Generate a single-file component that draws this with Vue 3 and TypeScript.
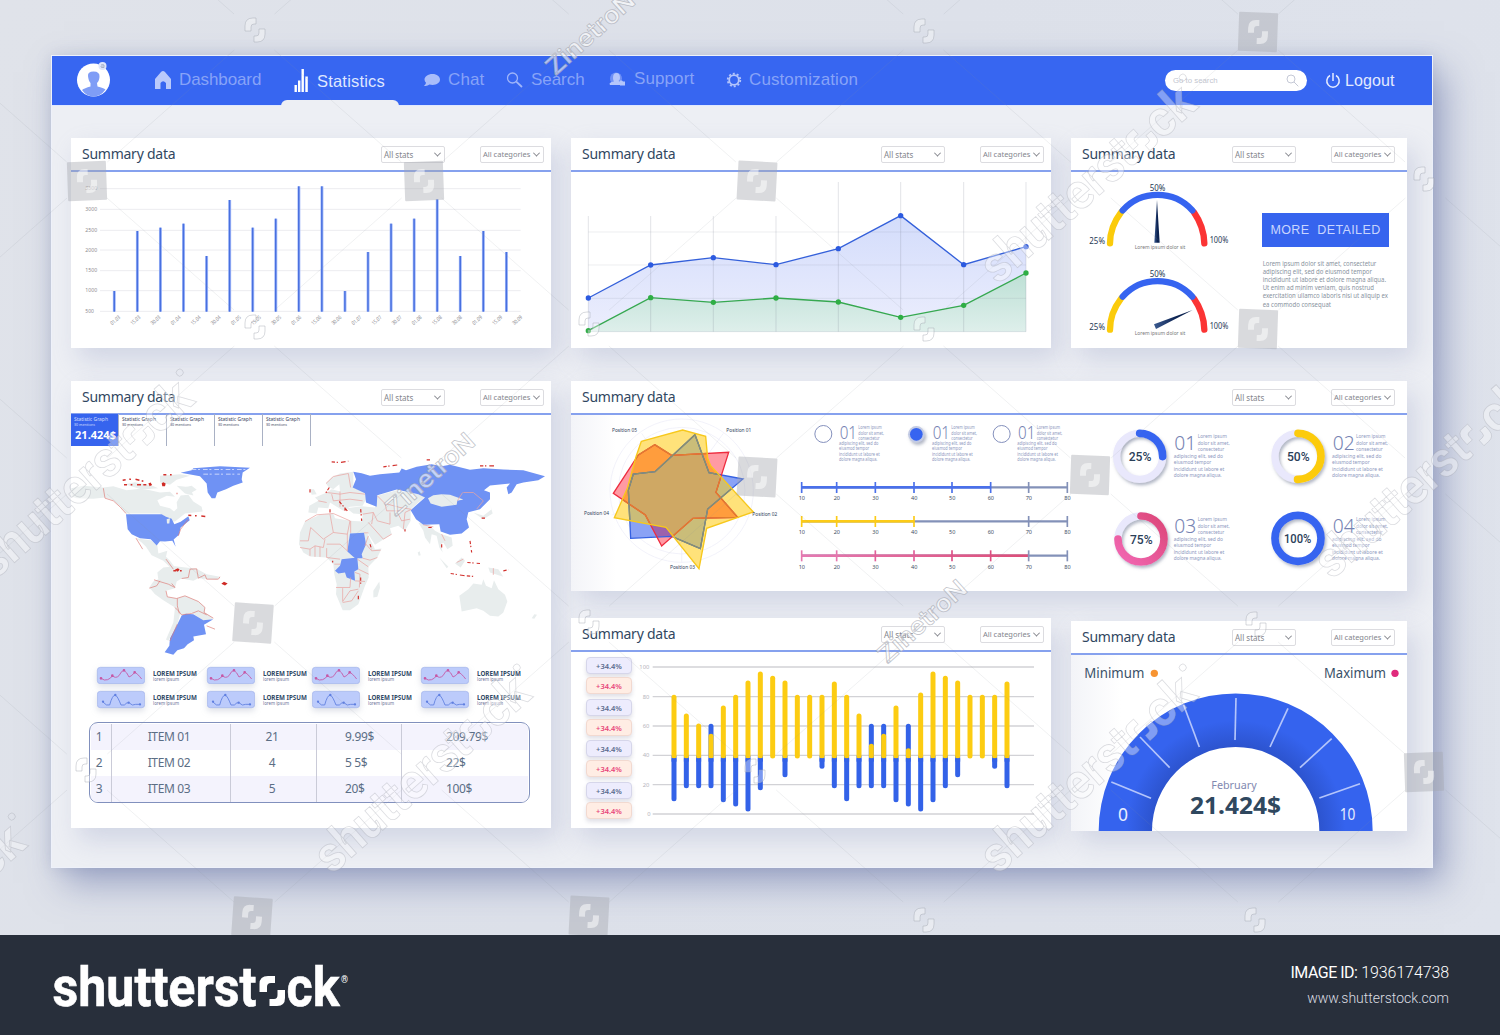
<script setup lang="ts">
import { h } from 'vue'

/* SVG text that is fitted to a given width through textLength */
const T = (p: Record<string, unknown>, { slots }: any) =>
  h('text', { lengthAdjust: 'spacingAndGlyphs', ...p }, slots.default?.())

const months = ['03', '04', '05', '06', '07', '08', '09']
const dates = months.flatMap((m) => ['01', '15', '30'].map((d) => `${d}.${m}`))
const barTops = [723, 543, 533, 521, 618, 450, 533, 506, 409, 409, 723, 606, 521, 506, 448, 618, 543, 606]
const barLines = [416, 478, 541, 600, 662, 722, 784]

const lx = [115, 302, 490, 678, 865, 1052, 1241, 1428]
const blueY = [744, 645, 623, 644, 596, 497, 644, 590]
const greenY = [842, 743, 757, 744, 756, 802, 766, 669]
const pts = (ys: number[]) => ys.map((y, i) => `${lx[i]},${y}`).join(' ')
const area = (ys: number[]) => `${pts(ys)} 1428,845 115,845`

const lorem = [
  { t: 'Lorem ipsum dolor sit amet, consectetur', w: 341 },
  { t: 'adipiscing elit, sed do eiusmod tempor', w: 328 },
  { t: 'incididunt ut labore et dolore magna aliqua.', w: 370 },
  { t: 'Ut enim ad minim veniam, quis nostrud', w: 334 },
  { t: 'exercitation ullamco laboris nisi ut aliquip ex', w: 376 },
  { t: 'ea commodo consequat', w: 205 },
]
const blurb = [
  { t: 'Lorem ipsum', x: 70, w: 88 },
  { t: 'dolor sit amet,', x: 70, w: 96 },
  { t: 'consectetur', x: 70, w: 80 },
  { t: 'adipiscing elit, sed do', x: -2, w: 148 },
  { t: 'eiusmod tempor', x: -2, w: 113 },
  { t: 'incididunt ut labore et', x: -2, w: 152 },
  { t: 'dolore magna aliqua.', x: -2, w: 144 },
]

const yellowP = '244,199 368,165 437,184 443,250 452,272 580,411 440,460 417,581 318,457 163,428 202,340 228,245'
const blueP = '405,179 447,293 549,312 443,402 421,521 335,484 212,490 205,345 220,297 285,290'
const redP = '284,209 335,241 506,232 468,352 533,427 399,430 305,513 256,420 160,355 235,240'

const sx = [35, 140, 256, 372, 486, 602, 716, 832]
const scales = [
  { y: 337, end: 602, c: '#4a70ea', skip: [] as number[] },
  { y: 439, end: 372, c: '#fccb17', skip: [486, 602] },
  { y: 542, end: 716, c: 'pink', skip: [] as number[] },
]
const pink = ['#e578ae', '#e578ae', '#e0609a', '#e0609a', '#dc5288', '#dc4f80', '#8a93b8', '#8391b8']
const tickColor = (s: (typeof scales)[0], i: number) =>
  s.c === 'pink' ? pink[i] : sx[i] <= s.end ? s.c : '#8391b8'

const donuts = [
  { x: 239, y: 244, p: 25, n: '01', c: '#3664f0', tx: 343, ty: 226 },
  { x: 714, y: 244, p: 50, n: '02', c: '#fccb0c', tx: 818, ty: 226 },
  { x: 243, y: 492, p: 75, n: '03', c: 'url(#pk)', tx: 343, ty: 475 },
  { x: 714, y: 490, p: 100, n: '04', c: '#3664f0', tx: 818, ty: 475 },
]
const circ = 2 * Math.PI * 69

const yTop = [254, 310, 340, 371, 286, 254, 211, 184, 197, 211, 254, 254, 254, 214, 254, 310, 401, 371, 286, 414, 247, 184, 197, 211, 254, 254, 254, 214]
const bBot = [574, 535, 535, 535, 577, 590, 605, 541, 0, 502, 0, 0, 477, 535, 574, 535, 535, 535, 577, 590, 605, 577, 535, 502, 0, 0, 477, 535]
const bHigh = [3, 16, 17, 19]

const ticks = [
  [303, 565, 184, 516], [359, 473, 270, 381], [448, 411, 401, 285], [555, 390, 558, 264],
  [660, 411, 714, 295], [750, 473, 845, 386], [808, 564, 930, 521],
]

const rows = [
  ['1', 'ITEM 01', '21', '9.99$', '209.79$'],
  ['2', 'ITEM 02', '4', '5 5$', '22$'],
  ['3', 'ITEM 03', '5', '20$', '100$'],
]

/* overlay lattice */
const tiles = [
  [87, 181, -2], [424, 181, -2], [757, 181, 3], [1258, 32, 2], [1258, 329, 2], [253, 623, 4],
  [757, 477, 3], [1090, 475, 2], [1424, 772, -2], [252, 917, 4], [589, 916, 3],
]
const marks = [
  [255, 30], [924, 31], [1424, 179], [255, 327], [589, 324], [924, 329], [86, 770],
  [589, 622], [755, 771], [924, 920], [1255, 920], [1256, 624],
]
const words = [[1090, 181], [87, 476], [424, 771], [1090, 771], [1424, 476], [-81, 920]]
const names = [[590, 33], [430, 474], [922, 621]]
const links: number[][] = []
for (let i = -1; i < 9; i++)
  for (let j = -1; j < 7; j++) {
    if ((i + j) % 2 === 0) continue
    const x = 87 + 167.3 * i
    const y = 32 + 148 * j
    links.push([x + 20, y + 18, x + 147, y + 130], [x - 20, y + 18, x - 147, y + 130])
  }
const glyph = 'M-10,1 V-4 Q-10,-12 -2,-12 H1 V-6 H-1 Q-4,-6 -4,-3 V1 Z M10,-1 V4 Q10,12 2,12 H-1 V6 H1 Q4,6 4,3 V-1 Z'
</script>

<template>
  <div class="page">
    <main class="stage">
      <div class="window">
        <header class="bar">
          <svg class="avatar" width="36" height="38" viewBox="0 0 36 38">
            <circle cx="17.500" cy="19" r="16.500" fill="#fff" />
            <path d="M12 15Q11.500 10.500 17.500 10.500Q24 10.500 23.500 16Q23 20.500 21 22L21.500 25.500Q27.500 27 29.500 28.500Q24.500 35.500 17.500 35.500Q10.500 35.500 6 29Q8.500 27 14.500 25.500V22Q12.500 20 12 15Z" fill="#7f9df6" />
            <circle cx="26.500" cy="5" r="4" fill="#dfe6fb" /><path d="M25 4q2-1 3 0v2.500h-2.500q-1-1 0-1.500h2" fill="none" stroke="#9aa6bd" stroke-width=".8" />
          </svg>
          <nav class="nav">
            <a class="n1"><svg width="18" height="20" viewBox="0 0 18 20"><path d="M1 9 L7 2 Q9 0 11 2 L17 9 V19 H12 V13 Q9 9.500 6.500 13 V19 H1Z" fill="#b9c9fb" /></svg><span>Dashboard</span></a>
            <a class="n2"><svg width="15" height="23" viewBox="0 0 15 23"><path d="M.5 16h2.400v7H.5zM4 11.500h2.400V23H4zM7.500 0h2.400v23H7.500zM11.300 7.500h2.500V23h-2.500z" fill="#fff" /></svg><span>Statistics</span></a>
            <a class="n3"><svg width="18" height="14" viewBox="0 0 18 14"><path d="M9.500 1C14 1 17 3.500 17 6.600S14 12 9.500 12Q8 12 6.500 11.600Q4 13.500 1 12.800Q3 11.500 3 9.800Q1.500 8.300 1.500 6.500C1.500 3.500 5 1 9.500 1Z" fill="#a9bdfa" /></svg><span>Chat</span></a>
            <a class="n4"><svg width="17" height="16" viewBox="0 0 17 16"><g fill="none" stroke="#9fb5fa" stroke-width="1.300"><circle cx="6.500" cy="6" r="5" /><path d="M10.300 9.600 L16 15" stroke-width="1.800" /></g></svg><span>Search</span></a>
            <a class="n5"><svg width="18" height="15" viewBox="0 0 18 15"><circle cx="8" cy="6.500" r="6" fill="#6f90f6" /><path d="M5 6Q5 1 8.500 1T12 6Q12 8 10.500 9L15 11V13H2Q0 10.500 6 9.500Q5 8 5 6Z" fill="#b4c5fb" /><path d="M12 8.500h2l1 1h2v4h-5z" fill="#b4c5fb" /></svg><span>Support</span></a>
            <a class="n6"><svg width="16" height="16" viewBox="-8 -8 16 16"><circle r="4.800" fill="none" stroke="#b4c5fb" stroke-width="1.800" /><circle r="6.300" fill="none" stroke="#b4c5fb" stroke-width="1.800" stroke-dasharray="2 1.960" /></svg><span>Customization</span></a>
          </nav>
          <div class="search"><span>Go to search</span><svg width="13" height="13" viewBox="0 0 13 13"><g fill="none" stroke="#c5c9d6"><circle cx="5" cy="5" r="4" /><path d="M8 8 L12.300 12.300" /></g></svg></div>
          <a class="logout"><svg width="16" height="16" viewBox="0 0 16 16"><g fill="none" stroke="#e6ecff" stroke-width="1.500"><path d="M5 2.500A6.200 6.200 0 1 0 11 2.500M8 0V8" /></g></svg><span>Logout</span></a>
          <i class="tab"></i>
        </header>

        <div class="body">
          <div class="col left">
            <section class="card h210">
              <div class="head"><h2>Summary data</h2><span class="sel">All stats<i></i></span><span class="sel b">All categories<i></i></span></div>
              <svg class="fill" viewBox="71 172 480 176">
                <g transform="translate(50 50) scale(.33333)">
                  <path v-for="y in barLines" :key="y" :d="`M150 ${y}H1412`" stroke="#ececf0" stroke-width="3" />
                  <T v-for="(y, i) in barLines" :key="'l' + y" x="106" :y="y + 5" font-size="16" :textLength="i === 6 ? 26 : 36" fill="#8d8d92">{{ 3500 - i * 500 }}</T>
                  <g v-for="(t, i) in barTops" :key="i">
                    <rect :x="188.500 + i * 69.200" :y="t" width="9" :height="785 - t" fill="#a9befa" />
                    <rect :x="190.500 + i * 69.200" :y="t" width="4.500" :height="785 - t" fill="#4870e0" />
                  </g>
                  <T v-for="(d, i) in dates" :key="d" :transform="`translate(${187 + i * 60.300} 826) rotate(-42)`" font-size="16" textLength="34" fill="#8a8a90">{{ d }}</T>
                </g>
              </svg>
            </section>

            <section class="card h447">
              <div class="head"><h2>Summary data</h2><span class="sel">All stats<i></i></span><span class="sel b">All categories<i></i></span></div>
              <div class="tabs">
                <div v-for="n in 5" :key="n" :class="{ on: n === 1 }">
                  <svg width="48" height="32" viewBox="0 0 48 32"><T x="3" y="7" font-size="6" textLength="34">Statistic Graph</T><T x="3" y="12" font-size="4" textLength="21">30 mentions</T><T v-if="n === 1" x="4" y="25" font-size="10.500" font-weight="bold" textLength="41" fill="#fff">21.424$</T></svg>
                </div>
              </div>
              <svg class="map" viewBox="71 446 480 216">
                <g transform="translate(60 375) scale(.33333)" stroke-linejoin="round">
                  <g fill="#e8eded">
                    <path d="M34 332L70 325L130 330L160 326L200 338L240 334L270 338L300 345L330 343L345 358L320 355L292 368L300 385L330 392L342 402L352 392L350 374L362 354L385 352L400 372L425 388L428 402L375 408L345 432L330 432L320 420L300 408H198L180 385L160 368L135 360L100 364L50 362L34 357Z" />
                    <path d="M195 320l30-6 50 10 20 8-50 4zM300 295l60-5 30 5-40 12-20 15-30-8zM350 325l40 4 10 25-25-6zM370 330l25-5 15 12-15 8z" />
                    <path d="M228 482L272 488L292 503L295 528L322 520L318 538L330 550L345 570L335 574L310 550L275 533L258 508L245 495Z" />
                    <path d="M292 585L310 570L345 566L410 574L440 590L480 598L470 607L415 602L400 610L365 603L350 612L345 632L318 640L322 658L350 663L375 655L415 672L435 690L435 705L460 722L440 735L395 706L360 712L352 740L325 790L318 786L340 735L345 690L310 668L285 650L268 630L280 612L295 605Z" />
                  </g>
                  <g fill="#6f92f4">
                    <path d="M198 410H305L318 418L335 424L343 440L362 433L385 416L389 428L362 450L357 472L341 486L347 508L337 490L315 492L300 491L290 504L272 485L240 482L215 470L203 455Z" />
                    <path d="M362 286L395 278L400 272L480 266L570 271L548 285L545 305L548 315L520 325L498 335L472 345L466 362H455L443 345L440 318L420 296Z" />
                    <path d="M365 714L378 709L400 710L430 728L460 725L432 742L438 770L400 777L402 788L383 800L372 812L352 818L340 832L314 824L328 805L330 782L350 745Z" />
                  </g>
                  <path d="M320 425l10-3-2 16h-7z" fill="#e8eded" />
                  <g fill="none" stroke="#dd7a76" stroke-width="2">
                    <path d="M130 332L135 362L160 370L180 388L198 408M282 607L325 620L345 630L335 618M318 640L322 658L350 663L375 655L415 672L435 690L432 705L460 722M345 690L355 700L365 712L395 708L415 700L440 712M352 663L352 685L358 708M365 603L385 600L390 575L410 574L415 602L435 592L440 605H475L480 598M352 740L330 790M228 482L248 515M268 632L290 625L300 610M440 745L465 755M385 425L362 455L355 475M318 545L340 575" />
                  </g>
                  <g stroke="#d2302c" stroke-width="4.500" fill="none" stroke-dasharray="9 11 5 14 12 7"><path d="M188 308L220 304L250 311M310 292H335M192 322H285M340 580H365M385 413L440 417M350 348H352" /></g>
                  <path d="M305 317l5-3 7 4-2 8h-8zM484 619l8-6 11 5-8 6zM265 318l7-3 3 6-6 5zM345 576l9-4 5 5-6 6z" fill="#cf2b25" />
                  <path d="M395 276H560M430 290H540" stroke="#cad6fb" stroke-width="3" stroke-dasharray="14 5 6 9" />
                </g>
                <g transform="translate(290 375) scale(.33333)" stroke-linejoin="round">
                  <g fill="#e8eded">
                    <path d="M108 318L125 300L150 288L190 283L190 330L225 345L228 365L218 385L180 388L160 400L120 375L115 392L85 390L80 408L55 405L58 385L85 370L75 360L110 345L125 335L150 342L148 320L130 335L115 328ZM60 335l12 0 8 15-15 2z" />
                    <path d="M170 392L215 386L255 390L262 355L320 338L385 350L405 358L362 395L362 430L345 460L325 445L300 452L305 470L255 502L235 470L215 435L218 410L190 408Z" />
                    <path d="M385 435L420 445L435 460L455 470L485 480L488 505L472 515L460 495L452 500L458 525L448 510L440 475L425 470L420 500L405 480L400 460Z" />
                    <path d="M45 432L90 412L130 408L135 422L180 430L220 432L235 475L255 515L275 513L262 540L235 568L236 600L225 625L205 680L180 698L158 698L138 650L140 620L133 590L130 560L110 540L60 537L40 525L27 500L30 465Z" />
                    <path d="M250 640L268 612L270 630L262 658L250 660ZM495 558L515 540L525 550L512 570ZM448 540L475 568L470 572ZM595 570L625 575L640 598L600 585ZM550 405L580 415L605 395L600 380L608 408L580 425Z" />
                    <path d="M508 655L535 635L550 618L575 622L580 605L588 625L605 632L612 608L625 635L645 652L652 672L640 705L625 717L600 715L580 700L560 692L515 702Z" />
                    <path d="M725 722l8-12 8 2-8 12zM383 525l6-4 3 12-6 2z" />
                  </g>
                  <g fill="#6f92f4">
                    <path d="M190 283L215 287L240 295L270 290L328 285L335 273L348 278L380 268L425 260L455 266L480 262L540 277L580 272L640 276L700 278L765 296L745 308L700 315L680 320L665 345L655 350L650 330L660 318L600 324L582 338L600 345L600 365L570 395L535 404L530 425L537 450L515 468L480 472L452 462L448 440L400 442L378 425L362 398L405 360L385 350L320 336L262 353L260 388L228 375L225 347L188 330L198 305Z" />
                    <path d="M180 468L222 466L228 500L215 530L218 542L195 542L172 522ZM155 545L202 540L205 575L193 582L195 610L170 600L165 585L145 588L135 580L150 565Z" />
                  </g>
                  <path d="M414 362L430 353L455 350L480 352L520 366L502 370L500 382L455 388L422 378Z" fill="#e8eded" />
                  <g fill="none" stroke="#e9a5a2" stroke-width="2.200">
                    <path d="M45 432L80 412L130 408L180 430M62 450L55 490L30 490M62 450L100 485L130 465L120 410M130 465L172 470L180 430M172 470V520M182 430V466M30 510L60 515L75 505L100 510L105 485M60 515V535M75 505V538M90 508V538M110 512V540M110 500L150 500L172 520M110 540L150 545M133 560H150M222 466H235M228 500L245 520L272 518M218 542L240 548L262 540M202 545L235 568M205 575L236 590M195 610L225 612M138 630H180L182 600M158 632V672L180 640L205 635M158 675L185 670L205 640M195 585L210 590L208 630M235 475L225 505M218 410L250 405L262 430L300 440M262 355L285 378L330 390L362 395M285 378L290 400L340 400M300 405V440M320 400L335 430L360 425M235 435L280 485L305 470M250 405L245 440M110 345L150 350L180 345L225 350M125 350L130 370L180 365L218 370M150 342V388M85 370L110 375M108 318L130 297L175 288L182 330M400 442L430 448M455 470L465 490M365 395L345 405L340 455M520 345L550 345L580 370L560 395M502 370L518 345M610 572V592M500 555L520 545" />
                  </g>
                  <g stroke="#d2302c" stroke-width="3.500" fill="none" stroke-dasharray="10 5 4 9 14 7">
                    <path d="M125 253L150 255L175 251M280 268L325 262M410 247H420M570 265H615M118 330L105 350M148 372L172 400M212 395L215 430M482 588L520 594L555 597M532 555L570 558M540 490L545 525M640 580L655 577M60 335V345M165 390V405M240 500L245 515M212 600V620M128 550V555M455 500V512M575 422H585M345 455V462M415 450H430M205 655V670M120 395V410" />
                  </g>
                </g>
              </svg>
              <div class="sparks" v-for="r in 2" :key="r">
                <div v-for="n in 4" :key="n" :class="'s' + n">
                  <svg width="48" height="17" viewBox="0 0 144 51">
                    <rect x="1" y="1" width="142" height="49" rx="9" fill="#bccbfb" stroke="#a3b3ea" stroke-width="2" />
                    <g v-if="r === 1" fill="none" stroke="#c657a5" stroke-width="2.600"><path d="M12 34Q22 42 32 38T46 26Q56 36 66 26Q74 10 81 10Q90 16 96 30Q104 28 113 16Q120 18 134 36" /><path d="M12 34v.1M46 26v.1M81 10v.1M113 16v.1" stroke-width="8" stroke-linecap="round" /></g>
                    <g v-else fill="none" stroke="#5f7fe0" stroke-width="2.600"><path d="M18 33Q28 46 38 42Q46 12 55 12Q62 16 72 42L82 42Q90 32 97 36Q106 46 116 40H130" /><path d="M18 32v.1M55 12v.1M95 35v.1M129 40v.1" stroke-width="7" stroke-linecap="round" /></g>
                  </svg>
                  <svg width="50" height="17" viewBox="0 0 50 17"><T x="0" y="9" font-size="6.500" font-weight="bold" textLength="44" fill="#314a66">LOREM IPSUM</T><T x="0" y="14" font-size="4.500" textLength="26" fill="#6c7398">lorem ipsum</T></svg>
                </div>
              </div>
              <div class="table">
                <div class="row" v-for="r in rows" :key="r[0]"><span v-for="(c, i) in r" :key="i" :class="'c' + i">{{ c }}</span></div>
              </div>
            </section>
          </div>

          <div class="col right">
            <div class="line">
              <section class="card w480 h210">
                <div class="head"><h2>Summary data</h2><span class="sel">All stats<i></i></span><span class="sel b">All categories<i></i></span></div>
                <svg class="fill" viewBox="571 172 480 176">
                  <defs>
                    <linearGradient id="ga" x1="0" y1="0" x2="0" y2="1"><stop offset="0" stop-color="#d3dcfb" /><stop offset="1" stop-color="#eceefd" /></linearGradient>
                    <linearGradient id="gb" x1="0" y1="0" x2="0" y2="1"><stop offset="0" stop-color="#bde0d5" /><stop offset="1" stop-color="#deefeb" /></linearGradient>
                  </defs>
                  <g transform="translate(550 50) scale(.33333)">
                    <polygon :points="area(blueY)" fill="url(#ga)" />
                    <polygon :points="area(greenY)" fill="url(#gb)" />
                    <path v-for="y in [546, 645, 745, 845]" :key="y" :d="`M115 ${y}H1428`" stroke="#70758a" stroke-opacity=".13" stroke-width="3" />
                    <path v-for="(x, i) in lx" :key="x" :d="`M${x} ${i < 4 ? 498 : 396}V845`" stroke="#70758a" stroke-opacity=".2" stroke-width="3" />
                    <polyline :points="pts(blueY)" fill="none" stroke="#3460da" stroke-width="4" />
                    <polyline :points="pts(greenY)" fill="none" stroke="#36a850" stroke-width="4" />
                    <circle v-for="(x, i) in lx" :key="'b' + x" :cx="x" :cy="blueY[i]" r="8" fill="#2c5ae0" />
                    <circle v-for="(x, i) in lx" :key="'g' + x" :cx="x" :cy="greenY[i]" r="8" fill="#2fae45" />
                  </g>
                </svg>
              </section>
              <section class="card w336 h210">
                <div class="head"><h2>Summary data</h2><span class="sel">All stats<i></i></span><span class="sel b">All categories<i></i></span></div>
                <div class="split">
                  <svg width="190" height="176" viewBox="1071 172 190 176">
                    <defs><linearGradient id="nd"><stop offset="0" stop-color="#3b5a90" /><stop offset=".6" stop-color="#0b2250" /></linearGradient></defs>
                    <g v-for="k in 2" :key="k" :transform="`translate(1050 ${k === 1 ? 0 : 86.300}) scale(.33333)`">
                      <g fill="none" stroke-width="19" stroke-linecap="round">
                        <path d="M180 730Q180 680 213 637" stroke="#fbcb0b" />
                        <path d="M463 730Q462 680 432 637" stroke="#fb3434" />
                        <path d="M218 631A141 141 0 0 1 427 631" stroke="#3664f0" />
                      </g>
                      <path v-if="k === 1" d="M321 600L329 728H313Z" fill="url(#nd)" />
                      <path v-else d="M428 671L318 728L312 714Z" fill="url(#nd)" />
                      <g fill="#1f3a55" font-size="25">
                        <T x="299" y="572" textLength="47">50%</T><T x="118" y="731" textLength="47">25%</T><T x="479" y="729" textLength="56">100%</T>
                        <T x="254" y="746" font-size="16" textLength="152" fill="#777">Lorem ipsum  dolor sit</T>
                      </g>
                    </g>
                  </svg>
                  <div class="more">
                    <button>MORE&nbsp; DETAILED</button>
                    <svg width="134" height="60" viewBox="1261 254 134 60"><g transform="translate(1050 0) scale(.33333)"><T v-for="(l, i) in lorem" :key="i" x="638" :y="797 + i * 24.600" font-size="20" :textLength="l.w" fill="#8993a0">{{ l.t }}</T></g></svg>
                  </div>
                </div>
              </section>
            </div>

            <section class="card h210 wide">
              <div class="head"><h2>Summary data</h2><span class="sel">All stats<i></i></span><span class="sel b">All categories<i></i></span></div>
              <svg class="fill" viewBox="571 415 836 176">
                <defs>
                  <linearGradient id="pk" x1="0" y1="1" x2="1" y2="0"><stop offset="0" stop-color="#f268b4" /><stop offset="1" stop-color="#dc4678" /></linearGradient>
                  <linearGradient id="pl" gradientUnits="userSpaceOnUse" x1="35" y1="0" x2="716" y2="0"><stop offset="0" stop-color="#e57ab2" /><stop offset="1" stop-color="#dc4d78" /></linearGradient>
                  <linearGradient id="sh"><stop offset="0" stop-color="#f3f4f8" /><stop offset="1" stop-color="#fff" /></linearGradient>
                  <filter id="ds" x="-30%" y="-30%" width="170%" height="170%"><feDropShadow dx="5" dy="7" stdDeviation="4" flood-color="#66718c" flood-opacity=".5" /></filter>
                  <clipPath id="cy"><polygon :points="yellowP" /></clipPath>
                  <clipPath id="cr"><polygon :points="redP" /></clipPath>
                </defs>
                <rect x="571" y="415" width="45" height="176" fill="url(#sh)" />
                <g transform="translate(560 375) scale(.33333)">
                  <g fill="none" stroke="#ebebf8" stroke-width="2"><circle cx="365" cy="347" r="215" /><circle cx="365" cy="347" r="190" /><path d="M365 347V562M365 347L560 425M365 347L490 175M365 347L245 175M365 347L155 420" /></g>
                  <polygon :points="blueP" fill="#8aa2f5" /><polygon :points="redP" fill="#ff9aa3" /><polygon :points="yellowP" fill="#ffe27a" />
                  <g clip-path="url(#cr)"><polygon :points="blueP" fill="#9c62ac" /></g>
                  <g clip-path="url(#cy)"><polygon :points="redP" fill="#ff9d3d" /><polygon :points="blueP" fill="#cabd79" /><g clip-path="url(#cr)"><polygon :points="blueP" fill="#cfa864" /></g></g>
                  <g fill="none" stroke-width="4"><polygon :points="blueP" stroke="#3561e2" /><polygon :points="redP" stroke="#ee2c3f" />
                    <g clip-path="url(#cy)"><polygon :points="redP" stroke="#e0802f" /><polygon :points="blueP" stroke="#8d9168" /></g>
                    <polygon :points="yellowP" stroke="#f7c81c" /></g>
                  <g font-size="17" fill="#2d4058"><T x="156" y="171" textLength="75">Position 05</T><T x="499" y="171" textLength="75">Position 01</T><T x="72" y="421" textLength="75">Position 04</T><T x="577" y="424" textLength="75">Position 02</T><T x="330" y="582" textLength="75">Position 03</T></g>
                </g>
                <g transform="translate(790 375) scale(.33333)">
                  <g v-for="(x, k) in [100, 379, 635]" :key="k">
                    <circle v-if="k !== 1" :cx="x" cy="177" r="25.500" fill="none" stroke="#8490bc" stroke-width="3" />
                    <g v-else><circle :cx="x" cy="178" r="25" fill="#c3cbe4" filter="url(#ds)" /><circle :cx="x" cy="178" r="19" fill="#3664f0" /></g>
                    <g :transform="`translate(${x + 49} 193)`">
                      <T x="0" y="0" font-size="54" textLength="52" font-weight="300" fill="#7683b3">01</T>
                      <T v-for="(b, i) in blurb" :key="i" :x="i < 3 ? 56 : -2" :y="-30 + i * 15.800" font-size="14" :textLength="b.w * 0.8" fill="#8e98c0">{{ b.t }}</T>
                    </g>
                  </g>
                  <g v-for="s in scales" :key="s.y">
                    <path :d="`M35 ${s.y}H832`" stroke="#8391b8" stroke-width="7" />
                    <rect x="35" :y="s.y - 4" :width="s.end - 35" height="8" :fill="s.c === 'pink' ? 'url(#pl)' : s.c" />
                    <template v-for="(x, i) in sx" :key="x">
                      <path v-if="!s.skip.includes(x)" :d="`M${x} ${s.y - 16}V${s.y + 17}`" :stroke="tickColor(s, i)" stroke-width="5" />
                      <T :x="x - 9" :y="s.y + 39" font-size="17" textLength="19" fill="#3c4c62">{{ 10 + i * 10 }}</T>
                    </template>
                  </g>
                </g>
                <g transform="translate(1060 375) scale(.33333)">
                  <g v-for="d in donuts" :key="d.n">
                    <circle :cx="d.x" :cy="d.y" r="69" fill="none" stroke="#e9e8fc" stroke-width="22" filter="url(#ds)" />
                    <circle v-if="d.p !== 75" :cx="d.x" :cy="d.y" r="69" fill="none" :stroke="d.c" stroke-width="23" stroke-linecap="round" :stroke-dasharray="`${(circ * d.p) / 100} 999`" :transform="`rotate(-90 ${d.x} ${d.y})`" />
                    <path v-else d="M243 423A69 69 0 1 1 174 492" fill="none" stroke="url(#pk)" stroke-width="23" stroke-linecap="round" />
                    <T class="rb" :x="d.x - (d.p === 100 ? 42 : 33)" :y="d.y + 14" font-size="38" font-weight="500" :textLength="d.p === 100 ? 82 : 68" fill="#2b4059">{{ d.p }}%</T>
                    <g :transform="`translate(${d.tx} ${d.ty})`">
                      <T x="0" y="0" font-size="62" font-weight="300" textLength="66" fill="#7683b3">{{ d.n }}</T>
                      <T v-for="(b, i) in blurb" :key="i" :x="b.x" :y="-37 + i * 19.700" font-size="17" :textLength="b.w" fill="#8e98c0">{{ b.t }}</T>
                    </g>
                  </g>
                </g>
              </svg>
            </section>

            <div class="line last">
              <section class="card w480 h210">
                <div class="head"><h2>Summary data</h2><span class="sel">All stats<i></i></span><span class="sel b">All categories<i></i></span></div>
                <div class="split">
                  <div class="badges"><span v-for="n in 8" :key="n">+34.4%</span></div>
                  <svg width="419" height="176" viewBox="632 652 419 176">
                    <g transform="translate(560 610) scale(.33333)">
                      <g v-for="(y, i) in [171, 260, 348, 436, 524, 612]" :key="y">
                        <path :d="`M278 ${y}H1422`" stroke="#d2d2d6" stroke-width="4" />
                        <T :x="i === 0 ? 238 : i === 5 ? 262 : 248" :y="y + 6" font-size="18" :textLength="i === 0 ? 30 : i === 5 ? 10 : 20" fill="#b5b5bb">{{ 100 - i * 20 }}</T>
                      </g>
                      <g stroke-linecap="round" stroke-width="15">
                        <template v-for="(b, i) in bBot" :key="'b' + i">
                          <path v-if="b" :d="`M${342 + i * 37} ${bHigh.includes(i) ? 349 : 440}V${b - 8}`" stroke="#3362e8" />
                        </template>
                        <path v-for="(y, i) in yTop" :key="'y' + i" :d="`M${342 + i * 37} ${y + 8}V438`" stroke="#fccc12" />
                        <template v-for="(b, i) in bBot" :key="'c' + i">
                          <rect v-if="b" :x="334.500 + i * 37" y="445" width="15" height="10" fill="#3362e8" />
                        </template>
                      </g>
                    </g>
                  </svg>
                </div>
              </section>
              <section class="card w336 h210 low">
                <div class="head"><h2>Summary data</h2><span class="sel">All stats<i></i></span><span class="sel b">All categories<i></i></span></div>
                <svg class="fill" viewBox="1071 655 336 176">
                  <defs><radialGradient id="dg" gradientUnits="userSpaceOnUse" cx="557" cy="660" r="411"><stop offset=".6" stop-color="#2c53cd" /><stop offset=".8" stop-color="#3563ee" /></radialGradient></defs>
                  <rect x="1071" y="655" width="50" height="176" fill="url(#sh)" />
                  <g transform="translate(1050 610) scale(.33333)">
                    <T x="103" y="203" font-size="42" textLength="180" fill="#3a5168">Minimum</T><circle cx="313" cy="190" r="11" fill="#f79432" />
                    <T x="822" y="203" font-size="42" textLength="186" fill="#3a5168">Maximum</T><circle cx="1035" cy="190" r="11" fill="#e02a7c" />
                    <path d="M146 663A411 413 0 0 1 968 663H808A251 252 0 0 0 306 663Z" fill="url(#dg)" />
                    <path v-for="t in ticks" :key="t[0]" :d="`M${t[0]} ${t[1]}L${t[2]} ${t[3]}`" stroke="#b4c5fb" stroke-width="5" />
                    <T x="204" y="632" font-size="52" textLength="30" fill="#e8eeff">0</T><T x="869" y="630" font-size="46" textLength="47" fill="#e8eeff">10</T>
                    <T x="484" y="538" font-size="32" textLength="136" fill="#8189b0">February</T>
                    <T x="420" y="611" font-size="68" font-weight="bold" textLength="273" fill="#2f485f">21.424$</T>
                  </g>
                </svg>
              </section>
            </div>
          </div>
        </div>
      </div>

      <svg class="overlay" width="1500" height="935" viewBox="0 0 1500 935">
        <path v-for="(l, i) in links" :key="i" :d="`M${l[0]} ${l[1]}L${l[2]} ${l[3]}`" stroke="#8c8f99" stroke-opacity=".13" />
        <g v-for="(m, i) in marks" :key="'m' + i" :transform="`translate(${m[0]} ${m[1]})`"><path :d="glyph" fill="#fff" fill-opacity=".35" stroke="#9ea2ad" stroke-opacity=".5" stroke-width=".8" /></g>
        <g v-for="(t, i) in tiles" :key="'t' + i" :transform="`translate(${t[0]} ${t[1]}) rotate(${t[2]})`"><rect x="-19.500" y="-19.500" width="39" height="39" rx="1" fill="#a4a6ae" fill-opacity=".42" /><path :d="glyph" fill="#fff" fill-opacity=".5" /></g>
        <g v-for="(w, i) in words" :key="'w' + i" :transform="`translate(${w[0]} ${w[1]}) rotate(-41.500)`" class="mark">
          <T x="-138" y="17" font-size="50" textLength="190">shutterst</T>
          <g transform="translate(66 2)"><path d="M-13 3V-4Q-13 -12 -5 -12H1V-5H-3Q-6 -5 -6 -2V3ZM13 1V7Q13 15 5 15H-1V8H3Q6 8 6 5V1Z" /></g>
          <T x="80" y="17" font-size="50" textLength="51">ck</T>
          <circle cx="138" cy="-16" r="3.500" fill="none" />
        </g>
        <g v-for="(w, i) in names" :key="'n' + i" :transform="`translate(${w[0]} ${w[1]}) rotate(-42)`" class="mark name"><T x="-55" y="9" font-size="25" textLength="110">ZinetroN</T></g>
      </svg>
    </main>

    <footer class="foot">
      <svg width="300" height="56" viewBox="50 958 300 56" fill="#fff" font-weight="700">
        <T class="rb" x="52.500" y="1006" font-size="56" textLength="204" stroke="#fff" stroke-width=".6">shutterst</T>
        <path d="M259.500 992V984Q259.500 976 268 976H275V983H271Q267 983 267 987V992ZM285 990V998Q285 1006 277 1006H269.500V999H274Q277.500 999 277.500 995V990Z" />
        <T class="rb" x="286.500" y="1006" font-size="56" textLength="53" stroke="#fff" stroke-width=".6">ck</T>
        <T class="rb" x="341" y="983" font-size="10" textLength="7">®</T>
      </svg>
      <div class="meta"><p><b>IMAGE ID:</b> 1936174738</p><p class="url">www.shutterstock.com</p></div>
    </footer>
  </div>
</template>

<style>
html, body { margin: 0; }
</style>
<style scoped>
.page { width: 1500px; height: 1035px; overflow: hidden; font-family: "Noto Sans", "Open Sans", sans-serif; }
svg { display: block; flex: none; overflow: visible; }
.page :deep(.rb), .page .rb { font-family: Roboto, sans-serif; }
.stage { position: relative; height: 935px; box-sizing: border-box; padding: 56px 0 0 52px; overflow: hidden; background: linear-gradient(115deg, #e0e3ea 0, #dde1ea 50%, #dfe3ec 100%); }
.window { width: 1380px; height: 811px; background: #edeff4; box-shadow: 0 0 0 1px #eef1fa, 12px 16px 34px rgba(88, 102, 160, .5), 0 0 14px rgba(120, 132, 170, .25); }
.bar { position: relative; height: 49px; background: #3766f1; box-shadow: 0 1px #dfe8ff; display: flex; align-items: center; box-sizing: border-box; padding: 0 0 1px 24px; font-family: "Liberation Sans", Arial, sans-serif; }
.nav { display: flex; width: 1053px; }
.nav a, .logout { display: flex; align-items: center; color: #87a3f8; white-space: nowrap; letter-spacing: .1px; }
.nav .n1 { margin-left: 42px; width: 140px; gap: 7px; font-size: 17px; letter-spacing: -.1px; }
.nav .n2 { color: #dfe7ff; width: 129px; gap: 8px; }
.nav .n2 span { font-size: 16.500px; padding-top: 2px; letter-spacing: .2px; }
.nav .n3 { width: 83px; gap: 7px; }
.nav .n3 span { font-size: 17px; }
.nav .n4 { width: 102px; gap: 8px; font-size: 17px; letter-spacing: -.05px; }
.nav .n5 { width: 118px; gap: 8px; font-size: 17px; padding-bottom: 2px; }
.nav .n6 { gap: 7px; font-size: 17px; }
.search { width: 142px; height: 21px; border-radius: 11px; background: #fff; box-sizing: border-box; padding: 0 8px; display: flex; align-items: center; justify-content: space-between; font-size: 7.800px; color: #c3c6d0; }
.logout { margin-left: 18px; gap: 4px; color: #e3eaff; font-size: 16px; padding-top: 2px; }
.tab { position: absolute; left: 229px; bottom: -1px; width: 118px; height: 6px; background: #edeff4; border-radius: 6px 6px 0 0; }
.body { display: flex; gap: 20px; padding: 33px 0 0 19px; }
.col { display: flex; flex-direction: column; gap: 33px; }
.left { width: 480px; }
.right { width: 836px; }
.line { display: flex; gap: 20px; }
.last { margin-top: -6px; align-items: flex-start; }
.low { margin-top: 3px; }
.card { background: #fff; box-shadow: 8px 12px 24px rgba(150, 160, 195, .32); display: flex; flex-direction: column; flex: none; }
.h210 { height: 210px; }
.h447 { height: 447px; }
.w480 { width: 480px; }
.w336 { width: 336px; }
.head { height: 34px; flex: none; box-sizing: border-box; border-bottom: 2px solid #86a1ee; display: flex; align-items: center; padding: 0 7px 0 11px; }
.head h2 { flex: 1; margin: 0; font-size: 14px; font-weight: 400; color: #31475f; line-height: 20px; white-space: nowrap; letter-spacing: -.25px; }
.sel { width: 64px; height: 17px; box-sizing: border-box; border: 1px solid #dcdce0; border-radius: 2px; padding: 0 4px 0 2px; display: flex; align-items: center; justify-content: space-between; font-size: 8px; color: #83858c; white-space: nowrap; }
.sel.b { margin-left: 35px; font-size: 7.500px; }
.w336 .head, .wide .head { padding-right: 12px; }
.sel i { width: 4px; height: 4px; border: solid #83858c; border-width: 0 1px 1px 0; transform: rotate(45deg) translate(-1px, -1px); flex: none; }
.fill { width: 100%; height: 176px; }
.tabs { display: flex; height: 32px; margin-top: -1px; }
.tabs div { width: 48px; height: 32px; flex: none; box-sizing: border-box; border-right: 1px solid #a9b1c4; fill: #3a4660; }
.tabs .on { background: #3664ee; fill: #d4defd; }
.map { width: 480px; height: 221px; }
.sparks { display: flex; padding-left: 26px; height: 24px; }
.sparks div { display: flex; gap: 8px; width: 110px; }
.sparks .s2 { width: 105px; }
.sparks .s3 { width: 109px; }
.sparks div > svg:first-child { filter: drop-shadow(0 3px 3px rgba(120, 130, 160, .25)); }
.table { margin: 7px 0 0 18px; width: 441px; height: 81px; box-sizing: border-box; border: 1.500px solid #8190bd; border-radius: 9px; padding: 1px 1px; overflow: hidden; }
.row { display: flex; height: 26px; line-height: 26px; font-size: 12px; color: #5b6e85; letter-spacing: -.35px; }
.row:nth-child(odd) { background: #f4f3fd; }
.row span { box-sizing: border-box; border-right: 1px solid #cacbd8; text-align: center; }
.row .c0 { width: 21px; padding-right: 4px; }
.row .c1 { width: 119px; padding-right: 4px; }
.row .c2 { width: 86px; padding-right: 3px; }
.row .c3 { width: 85px; text-align: left; padding-left: 28px; }
.row .c4 { flex: 1; border: 0; text-align: left; padding-left: 44px; }
.split { display: flex; }
.more { padding-top: 41px; }
.more button { display: block; width: 127px; height: 34px; margin: 0 0 7px 1px; padding: 0; border: 0; background: #3664ee; color: #c9d6ff; font: 12.500px "Liberation Sans", Arial, sans-serif; letter-spacing: .4px; white-space: nowrap; }
.badges { width: 61px; box-sizing: border-box; padding: 5px 0 0 15px; }
.badges span { display: block; height: 17px; line-height: 16px; box-sizing: border-box; border: 1px solid #d6d6ea; border-radius: 4px; background: #edecfd; color: #5b6b8e; font-size: 7.500px; font-weight: 600; text-align: center; margin-bottom: 4.600px; box-shadow: 0 3px 4px rgba(120, 120, 150, .22); }
.badges span:nth-child(odd) { margin-bottom: 3px; }
.badges span:nth-child(even) { background: #ffede4; border-color: #f2d9d0; color: #e8457a; }
.overlay { position: absolute; left: 0; top: 0; pointer-events: none; }
.mark { fill: #fff; fill-opacity: .38; stroke: #9a9da8; stroke-opacity: .36; stroke-width: .8; font-family: Roboto, sans-serif; font-weight: 700; }
.name { fill-opacity: .6; stroke-opacity: .6; font-weight: 500; }
.foot { height: 100px; background: #282f3b; display: flex; justify-content: space-between; align-items: flex-start; box-sizing: border-box; padding: 23px 51px 0 50px; font-family: Roboto, sans-serif; color: #fff; }
.meta { text-align: right; padding-top: 5px; }
.meta p { margin: 0; font-size: 16px; line-height: 20px; letter-spacing: -.1px; font-weight: 300; }
.meta b { font-weight: 400; letter-spacing: -.5px; }
.meta .url { font-size: 14px; line-height: 20px; margin-top: 5px; color: #dcdee2; letter-spacing: 0; }
</style>
